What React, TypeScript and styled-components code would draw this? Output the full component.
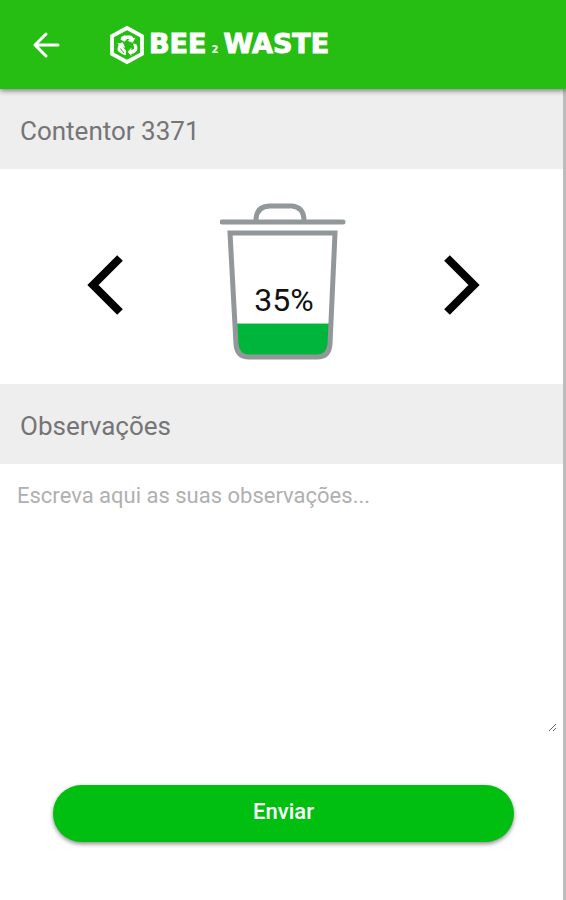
import React, { useState } from "react";
import styled, { createGlobalStyle } from "styled-components";

const GlobalStyle = createGlobalStyle`
  *, *::before, *::after { box-sizing: border-box; }
  body {
    margin: 0;
    background: #fff;
    font-family: Roboto, "Liberation Sans", sans-serif;
  }
`;

const Page = styled.div`
  display: flex;
  flex-direction: column;
  min-height: 100vh;
`;

const Header = styled.header`
  display: flex;
  align-items: center;
  gap: 43px;
  height: 89px;
  padding: 0 26px;
  background: #27be14;
  box-shadow: 0 2px 5px rgba(0, 0, 0, 0.45);
  z-index: 1;
`;

const IconButton = styled.button`
  display: flex;
  padding: 0;
  border: 0;
  background: none;
  color: inherit;
  cursor: pointer;
`;

const BackButton = styled(IconButton)`
  padding: 4px;
  color: #fff;
`;

const Brand = styled.div`
  display: flex;
  align-items: center;
  gap: 4px;
  color: #fff;
`;

const Wordmark = styled.span`
  display: flex;
  align-items: baseline;
  gap: 5px;
  padding-top: 4px;
  font: 700 27px/32px "DejaVu Sans", sans-serif;
  -webkit-text-stroke: 1px #fff;
`;

const Small = styled.span`
  font-size: 10px;
  -webkit-text-stroke: 0;
`;

const Content = styled.main`
  flex: 1;
  display: flex;
  flex-direction: column;
  border-right: 3px solid #bdbdbd;
`;

const SectionTitle = styled.h2`
  margin: 0;
  padding: 4px 20px 0;
  background: #eee;
  color: #757575;
  font-size: 26px;
  font-weight: 400;
  line-height: 76px;
`;

const LevelPicker = styled.section`
  display: flex;
  align-items: center;
  justify-content: space-between;
  padding: 33px 82px 17px 86px;
  color: #000;
`;

const ObservationsLabel = styled.label`
  display: block;
`;

const Notes = styled.textarea`
  display: block;
  margin: 0 6px 0 0;
  height: 268px;
  padding: 17px 17px;
  border: 0;
  outline: 0;
  resize: vertical;
  background: #fff;
  color: #333;
  font: 400 22px/30px Roboto, "Liberation Sans", sans-serif;
  &::placeholder { color: #b0b0b0; opacity: 1; }
`;

const SendButton = styled.button`
  margin: 53px 49px 56px 53px;
  height: 57px;
  padding: 0 0 3px;
  border: 0;
  border-radius: 29px;
  background: #00bf10;
  box-shadow: 0 2px 4px rgba(0, 0, 0, 0.45);
  color: #fff;
  font: 500 22px/28px Roboto, "Liberation Sans", sans-serif;
  cursor: pointer;
`;

function BackIcon() {
  return (
    <svg width="32" height="32" viewBox="0 0 32 32" fill="none" stroke="currentColor" strokeWidth="3" strokeLinecap="round" strokeLinejoin="round" aria-hidden="true">
      <path d="M28 16H5M16 5L5 16l11 11" />
    </svg>
  );
}

function HexagonLogo() {
  return (
    <svg width="36" height="40" viewBox="0 0 36 40" fill="none" aria-hidden="true">
      <path d="M18 3L33 11.2V28.8L18 37L3 28.8V11.2Z" stroke="#fff" strokeWidth="3.8" />
      <g fill="#fff">
        <path d="M11.5 14.5Q12.2 10.6 16 10.6H21.5Q23.7 10.8 24.2 13.2L26.4 12.6L23.8 17.8L18.4 15.8L20.6 14.9Q19.6 13.5 18 14.1L15.6 16.7Z" />
        <path d="M8 18.4L13.8 17.5L16.2 22.8L14 22.3L16.9 25.6V30.2Q12.2 29.4 9 26Q7.8 24 9.8 19.4Z" />
        <path d="M24 18.4L27.4 19.2Q29.6 24 27 26.5Q25.2 28.7 22.3 29V31L18.7 26.7L22.3 22.8V24.9Q25.2 24.4 25.2 22.7Z" />
      </g>
      <path d="M11.5 23.5L15 28" stroke="#27be14" strokeWidth="1" />
    </svg>
  );
}

function Chevron({ direction }: { direction: "left" | "right" }) {
  return (
    <svg width="38" height="64" viewBox="0 0 38 64" fill="none" stroke="currentColor" strokeWidth="8" aria-hidden="true">
      <path d={direction === "left" ? "M34 5L7 32l27 27" : "M4 5l27 27L4 59"} />
    </svg>
  );
}

const BinDrawing = styled.svg`
  display: block;
  font-family: Roboto, "Liberation Sans", sans-serif;
`;

function Bin({ level }: { level: number }) {
  const fillHeight = (level / 100) * 87;
  return (
    <BinDrawing width="128" height="165" viewBox="2 3 128 165" role="img" aria-label={`${level}%`}>
      <clipPath id="bin-inside">
        <path d="M13 37H116L112 147Q111 158 101 158H30Q20 158 19 147Z" />
      </clipPath>
      <rect x="10" y={155 - fillHeight} width="108" height={fillHeight + 2} fill="#00b53b" clipPath="url(#bin-inside)" />
      <g fill="none" stroke="#92979a" strokeWidth="5">
        <path d="M12 34H117L112 145Q111 158 99 158H31Q19 158 18 145Z" />
        <path d="M4 23H125" strokeLinecap="round" />
        <path d="M38 23V20Q39 7 52 7H74Q85 8 86 20V23" />
      </g>
      <text x="66" y="112" textAnchor="middle" fontSize="32" fill="#111">{level}%</text>
    </BinDrawing>
  );
}

export default function App() {
  const [level, setLevel] = useState(35);
  return (
    <>
      <GlobalStyle />
      <Page>
        <Header>
          <BackButton type="button" aria-label="Voltar"><BackIcon /></BackButton>
          <Brand>
            <HexagonLogo />
            <Wordmark><span>BEE</span><Small>2</Small><span>WASTE</span></Wordmark>
          </Brand>
        </Header>
        <Content>
          <SectionTitle>Contentor 3371</SectionTitle>
          <LevelPicker aria-label="Nível de enchimento">
            <IconButton type="button" aria-label="Diminuir" onClick={() => setLevel(Math.max(0, level - 5))}>
              <Chevron direction="left" />
            </IconButton>
            <Bin level={level} />
            <IconButton type="button" aria-label="Aumentar" onClick={() => setLevel(Math.min(100, level + 5))}>
              <Chevron direction="right" />
            </IconButton>
          </LevelPicker>
          <SectionTitle><ObservationsLabel htmlFor="notes">Observações</ObservationsLabel></SectionTitle>
          <Notes id="notes" placeholder="Escreva aqui as suas observações..." />
          <SendButton type="button">Enviar</SendButton>
        </Content>
      </Page>
    </>
  );
}
